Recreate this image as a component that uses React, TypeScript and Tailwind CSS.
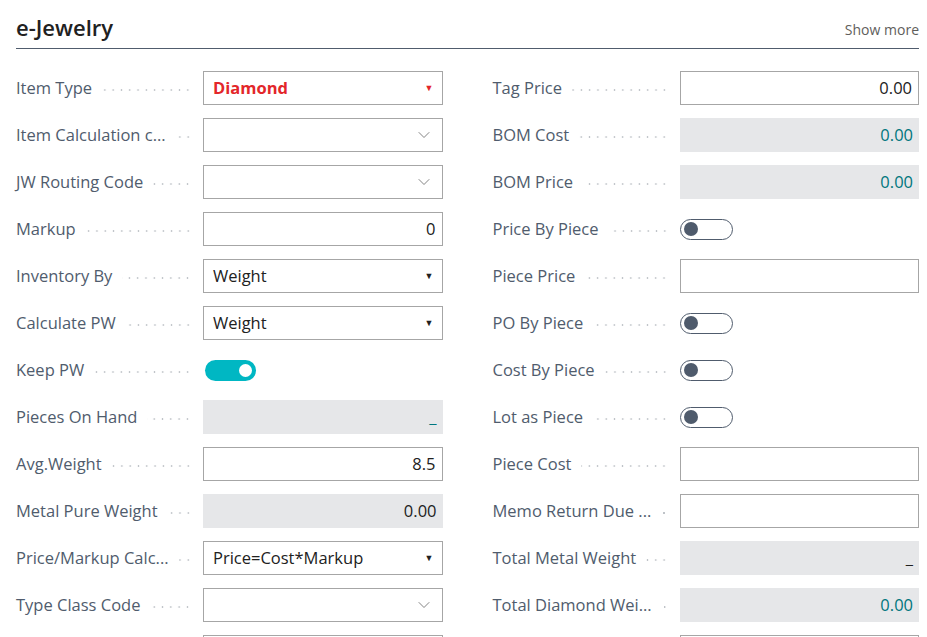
import { ChevronDown } from 'lucide-react'

type Field =
  | { kind: 'select'; value: string; accent?: boolean }
  | { kind: 'lookup' }
  | { kind: 'input'; value?: string }
  | { kind: 'readonly'; value: string; teal?: boolean }
  | { kind: 'toggle'; on: boolean }

type Row = { id: string; label: string; field: Field }

// Captions are shown as Business Central clips them (long ones end in "...").
const left: Row[] = [
  { id: 'type', label: 'Item Type', field: { kind: 'select', value: 'Diamond', accent: true } },
  { id: 'calc', label: 'Item Calculation c...', field: { kind: 'lookup' } },
  { id: 'route', label: 'JW Routing Code', field: { kind: 'lookup' } },
  { id: 'markup', label: 'Markup', field: { kind: 'input', value: '0' } },
  { id: 'inv', label: 'Inventory By', field: { kind: 'select', value: 'Weight' } },
  { id: 'cpw', label: 'Calculate PW', field: { kind: 'select', value: 'Weight' } },
  { id: 'kpw', label: 'Keep PW', field: { kind: 'toggle', on: true } },
  { id: 'poh', label: 'Pieces On Hand', field: { kind: 'readonly', value: '_', teal: true } },
  { id: 'avg', label: 'Avg.Weight', field: { kind: 'input', value: '8.5' } },
  { id: 'mpw', label: 'Metal Pure Weight', field: { kind: 'readonly', value: '0.00' } },
  { id: 'pmc', label: 'Price/Markup Calc...', field: { kind: 'select', value: 'Price=Cost*Markup' } },
  { id: 'tcc', label: 'Type Class Code', field: { kind: 'lookup' } },
  // next row only peeks in at the bottom edge
  { id: 'next', label: '', field: { kind: 'input' } },
]

const right: Row[] = [
  { id: 'tag', label: 'Tag Price', field: { kind: 'input', value: '0.00' } },
  { id: 'bomc', label: 'BOM Cost', field: { kind: 'readonly', value: '0.00', teal: true } },
  { id: 'bomp', label: 'BOM Price', field: { kind: 'readonly', value: '0.00', teal: true } },
  { id: 'pbp', label: 'Price By Piece', field: { kind: 'toggle', on: false } },
  { id: 'pp', label: 'Piece Price', field: { kind: 'input' } },
  { id: 'pobp', label: 'PO By Piece', field: { kind: 'toggle', on: false } },
  { id: 'cbp', label: 'Cost By Piece', field: { kind: 'toggle', on: false } },
  { id: 'lap', label: 'Lot as Piece', field: { kind: 'toggle', on: false } },
  { id: 'pc', label: 'Piece Cost', field: { kind: 'input' } },
  { id: 'mrd', label: 'Memo Return Due ...', field: { kind: 'input' } },
  { id: 'tmw', label: 'Total Metal Weight', field: { kind: 'readonly', value: '_' } },
  { id: 'tdw', label: 'Total Diamond Wei...', field: { kind: 'readonly', value: '0.00', teal: true } },
  { id: 'next', label: '', field: { kind: 'input' } },
]

export default function App() {
  return (
    <div
      className="h-[637px] overflow-hidden bg-white pl-4 pr-2 pt-[12px]"
      style={{ fontFamily: '"Open Sans", "Noto Sans", sans-serif' }}
    >
      <div className="flex items-end justify-between border-b border-[#505c6d] pb-[5px]">
        <h1 className="text-[22px] font-semibold leading-[31px] text-[#212121]">e-Jewelry</h1>
        <button type="button" className="mb-[3px] text-[14px] leading-[20px] text-[#605e5c]">
          Show more
        </button>
      </div>

      <div className="grid grid-cols-2 gap-x-[50px] pt-[22px]">
        <Column rows={left} />
        <Column rows={right} />
      </div>
    </div>
  )
}

function Column({ rows }: { rows: Row[] }) {
  return (
    <div className="flex flex-col gap-[13px]">
      {rows.map((row) => (
        <div key={row.id} className="flex h-[34px] items-center">
          <div className="flex w-[176px] shrink-0 items-center">
            <span className="whitespace-nowrap text-[16.5px] leading-[24px] text-[#505c6d]">
              {row.label}
            </span>
            {/* dotted leader between the caption and the control */}
            <span className="mt-[4px] ml-[10px] h-[2px] min-w-[6px] flex-1 bg-[radial-gradient(circle,#bfc3c8_0.8px,transparent_1.1px)] bg-[length:8.3px_2px] bg-right" />
          </div>
          <div className="ml-[11px] flex-1">
            <Control field={row.field} />
          </div>
        </div>
      ))}
    </div>
  )
}

function Control({ field }: { field: Field }) {
  const box = 'flex h-[34px] w-full items-center text-[16.5px]'
  switch (field.kind) {
    case 'select':
      return (
        <div className={`${box} border border-[#a6a6a6] bg-white pl-[9px] pr-[8px]`}>
          <span className={field.accent ? 'font-bold text-[#e3262a]' : 'text-[#212121]'}>
            {field.value}
          </span>
          <span
            className={`ml-auto text-[9px] ${field.accent ? 'text-[#e3262a]' : 'text-[#212121]'}`}
          >
            ▼
          </span>
        </div>
      )
    case 'lookup':
      return (
        <div className={`${box} justify-end border border-[#a6a6a6] bg-white pr-[8px]`}>
          <ChevronDown size={20} strokeWidth={1} className="text-[#6b6b6b]" />
        </div>
      )
    case 'input':
      return (
        <div className={`${box} justify-end border border-[#a6a6a6] bg-white pr-[6px] text-[#212121]`}>
          {field.value}
        </div>
      )
    case 'readonly':
      return (
        <div
          className={`${box} justify-end bg-[#e6e7e9] pr-[6px] ${field.teal ? 'text-[#00767d]' : 'text-[#212121]'}`}
        >
          {field.value}
        </div>
      )
    case 'toggle':
      return field.on ? (
        <div className="ml-[2px] flex h-[21px] w-[51px] items-center justify-end rounded-full bg-[#00b7c3] pr-[4px]">
          <span className="h-[13px] w-[13px] rounded-full bg-white" />
        </div>
      ) : (
        <div className="flex h-[21px] w-[53px] items-center rounded-full border border-[#505c6d] bg-white pl-[3px]">
          <span className="h-[14px] w-[14px] rounded-full bg-[#4f5b6c]" />
        </div>
      )
  }
}
